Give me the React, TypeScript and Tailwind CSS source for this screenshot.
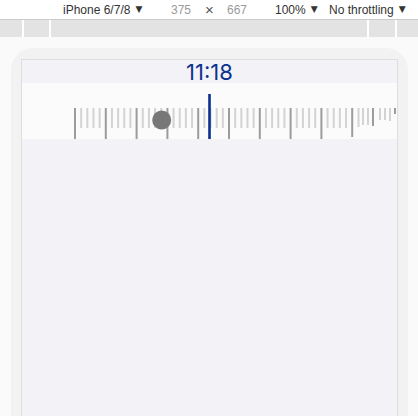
import React from "react";

type Tick = { x: number; h: number; dark: boolean };

function buildTicks(): Tick[] {
  const ticks: Tick[] = [];
  for (let i = 0; i <= 45; i++) {
    const long = i % 5 === 0;
    ticks.push({ x: 74 + i * 6.16, h: long ? (i === 45 ? 29 : 31) : 20, dark: long });
  }
  const tail: Tick[] = [
    { x: 357.5, h: 19, dark: false },
    { x: 362, h: 17, dark: false },
    { x: 367, h: 17, dark: false },
    { x: 372, h: 18, dark: true },
    { x: 379, h: 12, dark: false },
    { x: 384, h: 12, dark: false },
    { x: 389, h: 13, dark: false },
    { x: 394, h: 6, dark: true },
  ];
  return ticks.concat(tail);
}

function Ruler() {
  const ticks = buildTicks();
  return (
    <svg width="375" height="56" viewBox="0 0 375 56" className="block">
      {ticks.map((t, i) => (
        <rect
          key={i}
          x={t.x - 22}
          y={25}
          width={2}
          height={t.h}
          fill={t.dark ? "#9c9c9c" : "#d3d3d3"}
        />
      ))}
      <circle cx={139.7} cy={37} r={9.5} fill="#787878" />
      <rect x={186.2} y={11} width={2.6} height={45} fill="#0b2f8e" />
    </svg>
  );
}

function Caret() {
  return <span className="ml-[5px] text-[9px] leading-none font-['DejaVu_Sans']">▼</span>;
}

export default function App() {
  return (
    <div className="w-[418px] h-[416px] overflow-hidden bg-[#fafafa] font-['Liberation_Sans',sans-serif]">
      <div className="h-[20px] bg-white border-b border-[#cbcbcb] flex items-center pl-[63px] text-[12px] text-[#333]">
        <span className="w-[108px] flex items-center">iPhone 6/7/8<Caret /></span>
        <span className="w-[34px] text-[#9a9a9a]">375</span>
        <span className="w-[22px] text-[#555] text-[15px] leading-none">×</span>
        <span className="w-[48px] text-[#9a9a9a]">667</span>
        <span className="w-[54px] flex items-center">100%<Caret /></span>
        <span className="flex items-center">No throttling<Caret /></span>
      </div>
      <div className="h-[17px] flex gap-[2px] bg-white">
        <div className="w-[22px] bg-[#e3e3e3]" />
        <div className="w-[25px] bg-[#e3e3e3]" />
        <div className="w-[316px] bg-[#e3e3e3]" />
        <div className="w-[26px] bg-[#e3e3e3]" />
        <div className="flex-1 bg-[#e3e3e3]" />
      </div>
      <div className="mt-[11px] ml-[11px] w-[397px] h-[400px] rounded-t-[22px] bg-[#f2f2f2] pt-[11px] px-[10px]">
        <div className="w-[377px] h-[400px] border border-[#dedede] bg-[#f2f2f7]">
          <div className="h-[23px] flex items-center justify-center text-[22px] leading-none text-[#0d3290] font-['Inter',sans-serif] pt-[1px]">
            11:18
          </div>
          <div className="h-[56px] bg-[#fbfbfb]">
            <Ruler />
          </div>
        </div>
      </div>
    </div>
  );
}
